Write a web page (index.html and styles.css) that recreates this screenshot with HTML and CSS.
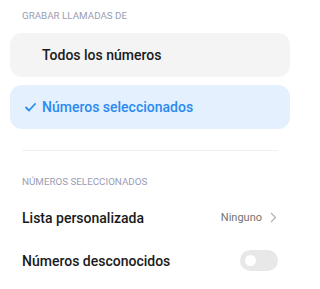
FILE: index.html
```html
<!DOCTYPE html>
<html lang="es">
<head>
<meta charset="utf-8">
<link rel="stylesheet" href="styles.css">
</head>
<body>
<div class="page">
  <div class="section-title">GRABAR LLAMADAS DE</div>
  <div class="options">
    <div class="option">
      <span class="check"></span>
      <span class="option-label">Todos los números</span>
    </div>
    <div class="option selected">
      <span class="check">
        <svg width="11" height="9" viewBox="0 0 11 9"><path d="M1 4.5 L4 7.5 L10 1" fill="none" stroke="#2a8af0" stroke-width="1.8" stroke-linecap="round" stroke-linejoin="round"/></svg>
      </span>
      <span class="option-label">Números seleccionados</span>
    </div>
  </div>
  <div class="divider"></div>
  <div class="section-title second">NÚMEROS SELECCIONADOS</div>
  <div class="row">
    <span class="row-label">Lista personalizada</span>
    <span class="row-value">Ninguno
      <svg class="chev" width="7" height="11" viewBox="0 0 7 11"><path d="M1 1 L5.5 5.5 L1 10" fill="none" stroke="#b0b0b0" stroke-width="1.1" stroke-linejoin="round"/></svg>
    </span>
  </div>
  <div class="row">
    <span class="row-label">Números desconocidos</span>
    <span class="toggle"><span class="knob"></span></span>
  </div>
</div>
</body>
</html>
```
FILE: styles.css
```css
* { box-sizing: border-box; }
html, body { margin: 0; padding: 0; background: #ffffff; }
body { font-family: Roboto, "Noto Sans", sans-serif; color: #1a1a1a; }
.page { width: 300px; height: 289px; overflow: hidden; }
.section-title {
  font-size: 9.8px;
  line-height: 12px;
  color: #9a9db3;
  padding: 10px 22px 0;
}
.section-title.second { padding-top: 0; margin-top: 25px; }
.options {
  display: flex;
  flex-direction: column;
  gap: 8px;
  margin: 11px 10px 0;
}
.option {
  display: flex;
  align-items: center;
  height: 44px;
  border-radius: 12px;
  background: #f4f4f4;
  padding-left: 15px;
}
.option.selected { background: #e4f0fd; color: #2a8af0; }
.check {
  width: 17px;
  display: flex;
  align-items: center;
}
.option-label {
  font-size: 14px;
  font-weight: 500;
  line-height: 44px;
}
.divider {
  height: 1px;
  background: #f1f1f1;
  margin: 21px 22px 0;
}
.row {
  display: flex;
  align-items: center;
  justify-content: space-between;
  height: 43px;
  padding: 0 22px;
}
.section-title.second + .row { margin-top: 8px; }
.row-label {
  font-size: 14px;
  font-weight: 500;
}
.row-value {
  display: flex;
  align-items: center;
  font-size: 11px;
  color: #737373;
}
.chev { margin-left: 8px; margin-right: 1px; }
.toggle {
  width: 38px;
  height: 21px;
  border-radius: 11px;
  background: #e8e8e8;
  display: flex;
  align-items: center;
  padding-left: 5px;
}
.knob {
  width: 11px;
  height: 11px;
  border-radius: 50%;
  background: #ffffff;
}
```
